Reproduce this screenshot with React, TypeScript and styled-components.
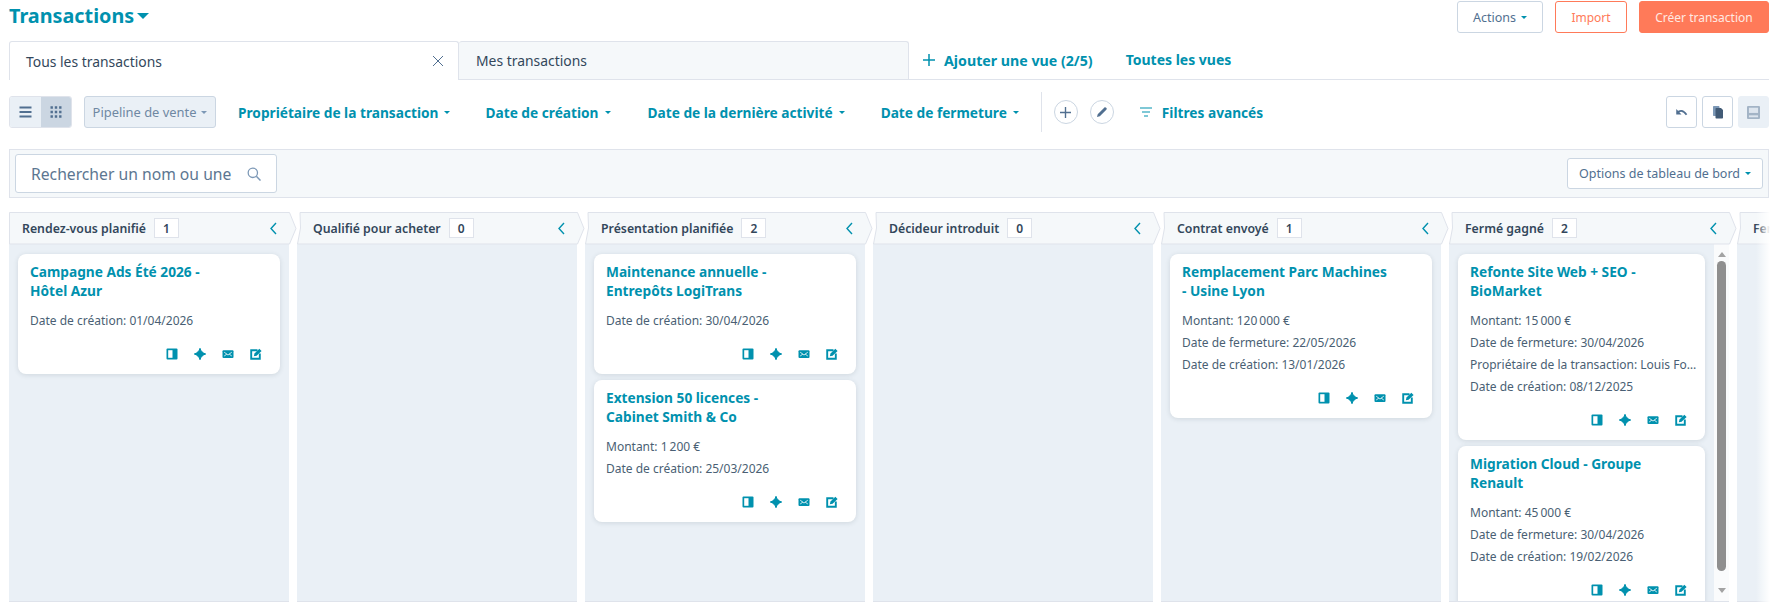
import React from "react";
import styled, { createGlobalStyle } from "styled-components";

const teal = "#0091ae";
const ink = "#33475b";
const slate = "#516f90";
const line = "#dfe3eb";
const font = `"Noto Sans", "Open Sans", sans-serif`;

const Global = createGlobalStyle`
  html, body { margin: 0; padding: 0; background: #fff; overflow: hidden; }
  * { box-sizing: border-box; }
  body { font-family: ${font}; color: ${ink}; }
`;

const Page = styled.div`
  width: 1780px;
  height: 604px;
  padding: 0 11px 0 9px;
  overflow: hidden;
`;

const TopRow = styled.header`
  display: flex;
  justify-content: space-between;
  align-items: flex-start;
  height: 41px;
  padding-top: 1px;
`;

const Title = styled.h1`
  margin: 0;
  display: flex;
  align-items: center;
  gap: 3px;
  height: 29px;
  font-size: 19.8px;
  font-weight: 700;
  color: ${teal};
`;

const BtnRow = styled.div`
  display: flex;
  gap: 12px;
`;

const Btn = styled.button<{ $kind?: "plain" | "line" | "solid"; $w?: number }>`
  width: ${(p) => (p.$w ? `${p.$w}px` : "auto")};
  height: 32px;
  padding: 0;
  border-radius: 3px;
  font-family: ${font};
  font-size: ${(p) => (p.$kind ? "12px" : "12.5px")};
  display: flex;
  align-items: center;
  justify-content: center;
  gap: 5px;
  border: 1px solid ${(p) => (p.$kind === "line" || p.$kind === "solid" ? "#ff7a59" : "#cbd6e2")};
  background: ${(p) => (p.$kind === "solid" ? "#ff7a59" : "#fff")};
  color: ${(p) => (p.$kind === "solid" ? "#ffe9e2" : p.$kind === "line" ? "#ff7a59" : slate)};
`;

const Caret = styled.span<{ $size?: number; $color?: string }>`
  display: inline-block;
  flex: none;
  width: 0;
  height: 0;
  border-left: ${(p) => p.$size ?? 3}px solid transparent;
  border-right: ${(p) => p.$size ?? 3}px solid transparent;
  border-top: ${(p) => p.$size ?? 3}px solid ${(p) => p.$color ?? teal};
`;

const TabBar = styled.nav`
  display: flex;
  align-items: stretch;
  height: 39px;
  border-bottom: 1px solid ${line};
`;

const Tab = styled.div<{ $active?: boolean }>`
  width: 450px;
  display: flex;
  align-items: center;
  justify-content: space-between;
  padding: 0 14px 0 ${(p) => (p.$active ? "16px" : "17px")};
  margin-bottom: ${(p) => (p.$active ? "-1px" : "0")};
  font-size: 13.9px;
  color: ${ink};
  background: ${(p) => (p.$active ? "#fff" : "#f5f8fa")};
  border: 1px solid ${line};
  border-bottom: none;
  border-left: ${(p) => (p.$active ? `1px solid ${line}` : "0")};
  border-radius: 3px 3px 0 0;
`;

const TabAdd = styled.div`
  display: flex;
  align-items: center;
  gap: 9px;
  margin-left: 14px;
  color: ${teal};
  font-size: 14.2px;
  font-weight: 700;
`;

const TabLink = styled.div`
  display: flex;
  align-items: center;
  margin-left: 33px;
  padding-bottom: 2px;
  color: ${teal};
  font-size: 14px;
  font-weight: 700;
`;

const Toolbar = styled.div`
  display: flex;
  align-items: center;
  height: 69px;
  padding: 0 0 5px;
`;

const Toggle = styled.div`
  display: flex;
  width: 63px;
  height: 32px;
  margin-right: 12px;
  border: 1px solid #dfe3eb;
  border-radius: 3px;
  overflow: hidden;
`;

const ToggleCell = styled.span<{ $on?: boolean }>`
  flex: 1;
  display: flex;
  align-items: center;
  justify-content: center;
  background: ${(p) => (p.$on ? "#cbd6e2" : "#eaf0f6")};
`;

const Pipeline = styled.div`
  width: 132px;
  height: 32px;
  display: flex;
  align-items: center;
  justify-content: center;
  gap: 5px;
  margin-right: 22px;
  background: #eaf0f6;
  border: 1px solid #cbd6e2;
  border-radius: 3px;
  color: #6f88a3;
  font-size: 12.9px;
`;

const Filter = styled.div<{ $gap: number }>`
  display: flex;
  align-items: center;
  gap: 6px;
  margin-right: ${(p) => p.$gap}px;
  color: ${teal};
  font-size: 13.7px;
  font-weight: 700;
  white-space: nowrap;
`;

const VSep = styled.span`
  width: 1px;
  height: 40px;
  background: ${line};
  margin-right: 12px;
`;

const RoundBtn = styled.span`
  width: 24px;
  height: 24px;
  border-radius: 50%;
  border: 1px solid #cbd6e2;
  display: flex;
  align-items: center;
  justify-content: center;
  margin-right: 12px;
`;

const Advanced = styled.div`
  display: flex;
  align-items: center;
  gap: 10px;
  margin-left: 14px;
  color: ${teal};
  font-size: 13.7px;
  font-weight: 700;
`;

const Spacer = styled.div`
  flex: 1;
`;

const SquareBtn = styled.span<{ $muted?: boolean }>`
  width: 31px;
  height: 32px;
  margin-left: 5px;
  display: flex;
  align-items: center;
  justify-content: center;
  border-radius: 3px;
  border: 1px solid ${(p) => (p.$muted ? "#eaf0f6" : "#cbd6e2")};
  background: ${(p) => (p.$muted ? "#eaf0f6" : "#fff")};
`;

const SearchStrip = styled.div`
  height: 49px;
  display: flex;
  align-items: center;
  justify-content: space-between;
  padding: 0 5px;
  background: #f5f8fa;
  border: 1px solid ${line};
`;

const SearchBox = styled.div`
  width: 262px;
  height: 39px;
  display: flex;
  align-items: center;
  justify-content: space-between;
  padding: 0 15px 0 15px;
  background: #fff;
  border: 1px solid #cbd6e2;
  border-radius: 3px;
  font-size: 15.7px;
  color: #5c7691;
  white-space: nowrap;
`;

const OptionsBtn = styled(Btn)`
  height: 31px;
`;

const Board = styled.section`
  position: relative;
  display: flex;
  gap: 8px;
  width: 1761px;
  height: 391px;
  margin-top: 14px;
  overflow: hidden;
  &::after {
    content: "";
    position: absolute;
    top: 0;
    bottom: 0;
    right: 0;
    width: 14px;
    background: linear-gradient(to right, rgba(255, 255, 255, 0), #fff);
  }
`;

const Column = styled.div`
  flex: none;
  width: 280px;
  display: flex;
  flex-direction: column;
`;

const ColHead = styled.div<{ $first?: boolean }>`
  position: relative;
  height: 32px;
  display: flex;
  align-items: center;
  padding: 0 12px 0 ${(p) => (p.$first ? "13px" : "16px")};
  flex: none;
`;

const HeadShape = styled.svg`
  position: absolute;
  left: 0;
  top: 0;
  width: 288px;
  height: 32px;
  overflow: visible;
`;

const HeadLabel = styled.span`
  position: relative;
  font-size: 12.3px;
  font-weight: 600;
  color: ${ink};
  white-space: nowrap;
`;

const Count = styled.span`
  position: relative;
  width: 25px;
  height: 20px;
  margin-left: 8px;
  display: flex;
  align-items: center;
  justify-content: center;
  font-size: 12px;
  font-weight: 600;
  background: #fff;
  border: 1px solid ${line};
  color: ${ink};
`;

const HeadChevron = styled.svg`
  position: relative;
  margin-left: auto;
`;

const ColBody = styled.div`
  flex: 1;
  display: flex;
  background: #eaf0f6;
  border-bottom: 1px solid ${line};
  margin-bottom: 1px;
  overflow: hidden;
`;

const CardList = styled.div`
  flex: 1;
  min-width: 0;
  display: flex;
  flex-direction: column;
  gap: 6px;
  padding: 10px 9px 0 9px;
`;

const Card = styled.article`
  flex: none;
  padding: 8px 12px 12px;
  background: #fff;
  border-radius: 8px;
  box-shadow: 0 1px 5px rgba(45, 62, 80, 0.14);
`;

const CardTitle = styled.div`
  font-size: 13.7px;
  line-height: 19px;
  font-weight: 700;
  color: ${teal};
  margin-bottom: 10px;
  min-height: 38px;
`;

const Row = styled.div`
  margin-right: -8px;
  font-size: 12px;
  line-height: 22px;
  color: #4a5f74;
  white-space: nowrap;
  overflow: hidden;
  text-overflow: ellipsis;
`;

const Actions = styled.div`
  display: flex;
  justify-content: flex-end;
  align-items: center;
  gap: 16px;
  height: 16px;
  margin-top: 14px;
  padding-right: 6px;
`;

const Scroll = styled.div`
  flex: none;
  width: 15px;
  background: #fafbfc;
  display: flex;
  flex-direction: column;
  align-items: center;
  padding-top: 8px;
`;

const ArrowUp = styled.span`
  width: 0;
  height: 0;
  border-left: 4.5px solid transparent;
  border-right: 4.5px solid transparent;
  border-bottom: 5px solid #a3a3a3;
`;

const ArrowDown = styled.span`
  width: 0;
  height: 0;
  margin-top: 17px;
  border-left: 4.5px solid transparent;
  border-right: 4.5px solid transparent;
  border-top: 5px solid #a3a3a3;
`;

const Thumb = styled.span`
  width: 9px;
  height: 310px;
  margin-top: 4px;
  border-radius: 5px;
  background: #8f8f8f;
`;

const IconSvg = styled.svg`
  display: block;
  flex: none;
`;

const Ic = ({ children, w = 12, h = 12, vb = "0 0 12 12" }: { children: React.ReactNode; w?: number; h?: number; vb?: string }) => (
  <IconSvg width={w} height={h} viewBox={vb}>
    {children}
  </IconSvg>
);

const CardIcons = () => (
  <Actions>
    <Ic>
      <rect x="0.5" y="0.5" width="11" height="11" rx="1" fill={teal} />
      <rect x="2.2" y="2.2" width="4.3" height="7.6" fill="#fff" />
    </Ic>
    <Ic>
      <path d="M6 0.3C6.8 3.2 8.6 5 11.7 6C8.6 7 6.8 8.8 6 11.7C5.2 8.8 3.4 7 0.3 6C3.4 5 5.2 3.2 6 0.3Z" fill={teal} stroke={teal} strokeWidth="1" />
    </Ic>
    <Ic>
      <rect x="0.5" y="2.2" width="11" height="7.8" rx="1" fill={teal} />
      <path d="M2.2 4.2L4.8 6.1L2.2 8M9.8 4.2L7.2 6.1L9.8 8M4.6 6.1L6 7L7.4 6.1" fill="none" stroke="#fff" strokeWidth="0.8" />
    </Ic>
    <Ic>
      <path d="M7.5 2.2H1.2V10.8H9.8V5.5" fill="none" stroke={teal} strokeWidth="1.9" />
      <path d="M3.8 8.3L4.5 5.6L9.3 0.8L11.6 3.1L6.6 7.7Z" fill={teal} />
    </Ic>
  </Actions>
);

type CardData = { title: React.ReactNode; rows: string[] };
type ColData = { name: string; count: number; cards: CardData[]; scroll?: boolean };

const columns: ColData[] = [
  {
    name: "Rendez-vous planifié",
    count: 1,
    cards: [{ title: <>Campagne Ads Été 2026 -<br />Hôtel Azur</>, rows: ["Date de création: 01/04/2026"] }],
  },
  { name: "Qualifié pour acheter", count: 0, cards: [] },
  {
    name: "Présentation planifiée",
    count: 2,
    cards: [
      { title: <>Maintenance annuelle -<br />Entrepôts LogiTrans</>, rows: ["Date de création: 30/04/2026"] },
      { title: <>Extension 50 licences -<br />Cabinet Smith &amp; Co</>, rows: ["Montant: 1\u202f200 €", "Date de création: 25/03/2026"] },
    ],
  },
  { name: "Décideur introduit", count: 0, cards: [] },
  {
    name: "Contrat envoyé",
    count: 1,
    cards: [
      {
        title: <>Remplacement Parc Machines<br />- Usine Lyon</>,
        rows: ["Montant: 120\u202f000 €", "Date de fermeture: 22/05/2026", "Date de création: 13/01/2026"],
      },
    ],
  },
  {
    name: "Fermé gagné",
    count: 2,
    scroll: true,
    cards: [
      {
        title: <>Refonte Site Web + SEO -<br />BioMarket</>,
        rows: ["Montant: 15\u202f000 €", "Date de fermeture: 30/04/2026", "Propriétaire de la transaction: Louis Fontaine", "Date de création: 08/12/2025"],
      },
      {
        title: <>Migration Cloud - Groupe<br />Renault</>,
        rows: ["Montant: 45\u202f000 €", "Date de fermeture: 30/04/2026", "Date de création: 19/02/2026"],
      },
    ],
  },
  { name: "Fermé perdu", count: 0, cards: [] },
];

const filters: [string, number][] = [
  ["Propriétaire de la transaction", 35],
  ["Date de création", 37],
  ["Date de la dernière activité", 36],
  ["Date de fermeture", 22],
];

const Shape = ({ first }: { first: boolean }) => (
  <HeadShape viewBox="0 0 288 32">
    <path
      d={first ? "M0.5 32V0.5H280.5L287 16.5L280.5 32Z" : "M0.5 32L3.5 16L3 0.5H280.5L287 16.5L280.5 32Z"}
      fill="#f5f8fa"
      stroke={line}
      strokeWidth="1"
    />
  </HeadShape>
);

export default function App() {
  return (
    <Page>
      <Global />
      <TopRow>
        <Title>
          Transactions <Caret $size={6} />
        </Title>
        <BtnRow>
          <Btn $w={86}>
            Actions <Caret />
          </Btn>
          <Btn $kind="line" $w={72}>Import</Btn>
          <Btn $kind="solid" $w={130}>Créer transaction</Btn>
        </BtnRow>
      </TopRow>

      <TabBar>
        <Tab $active>
          Tous les transactions
          <Ic>
            <path d="M1 1L11 11M11 1L1 11" stroke="#516f90" strokeWidth="1" />
          </Ic>
        </Tab>
        <Tab>Mes transactions</Tab>
        <TabAdd>
          <Ic>
            <path d="M6 0V12M0 6H12" stroke={teal} strokeWidth="1.5" />
          </Ic>
          Ajouter une vue (2/5)
        </TabAdd>
        <TabLink>Toutes les vues</TabLink>
      </TabBar>

      <Toolbar>
        <Toggle>
          <ToggleCell>
            <Ic w={13} h={12}>
              <path d="M0 1.5H12M0 6H12M0 10.5H12" stroke={slate} strokeWidth="2.2" />
            </Ic>
          </ToggleCell>
          <ToggleCell $on>
            <Ic>
              <path d="M0.5 1.5H11.5M0.5 6H11.5M0.5 10.5H11.5" stroke={slate} strokeWidth="2.4" strokeDasharray="2.4 1.9" />
            </Ic>
          </ToggleCell>
        </Toggle>
        <Pipeline>
          Pipeline de vente <Caret $color="#7c98b6" />
        </Pipeline>
        {filters.map(([f, g]) => (
          <Filter key={f} $gap={g}>
            {f} <Caret $size={3.5} />
          </Filter>
        ))}
        <VSep />
        <RoundBtn>
          <Ic w={11} h={11}>
            <path d="M6 0V12M0 6H12" stroke="#516f90" strokeWidth="1.5" />
          </Ic>
        </RoundBtn>
        <RoundBtn>
          <Ic>
            <path d="M1 11L1.7 8.2L8.2 1.7C8.8 1.1 9.5 1.1 10.2 1.8C10.9 2.5 10.9 3.2 10.3 3.8L3.8 10.3Z" fill="#516f90" />
          </Ic>
        </RoundBtn>
        <Advanced>
          <Ic>
            <path d="M0 2H12M2 6H10M4 10H8" stroke={teal} strokeWidth="1.2" />
          </Ic>
          Filtres avancés
        </Advanced>
        <Spacer />
        <SquareBtn>
          <Ic w={13} h={11}>
            <path d="M1.5 6.5C3.5 3.8 7.5 2.6 11.5 8.5" fill="none" stroke="#516f90" strokeWidth="1.9" />
            <path d="M0.3 2.3V8.3H6Z" fill="#516f90" />
          </Ic>
        </SquareBtn>
        <SquareBtn>
          <Ic w={12} h={14} vb="0 0 12 14">
            <path d="M1 2C1 1.4 1.4 1 2 1H6.5C7 1 7.5 1.5 7.5 2V10C7.5 10.6 7 11 6.5 11H2C1.4 11 1 10.6 1 10Z" fill="#7c98b6" />
            <path d="M3.5 4C3.5 3.4 3.9 3 4.5 3H9L11 5V12.5C11 13.1 10.6 13.5 10 13.5H4.5C3.9 13.5 3.5 13.1 3.5 12.5Z" fill="#425b76" />
          </Ic>
        </SquareBtn>
        <SquareBtn $muted>
          <Ic w={13} h={13}>
            <rect x="0" y="0" width="12" height="12" rx="1" fill="#a3b4c6" />
            <rect x="1.8" y="1.6" width="8.4" height="4.8" fill="#dde5ee" />
            <rect x="1.8" y="8.6" width="8.4" height="1.8" fill="#dde5ee" />
          </Ic>
        </SquareBtn>
      </Toolbar>

      <SearchStrip>
        <SearchBox>
          Rechercher un nom ou une
          <Ic w={14} h={14}>
            <circle cx="5" cy="5" r="4" fill="none" stroke="#7c98b6" strokeWidth="1.1" />
            <path d="M8 8L11.6 11.6" stroke="#7c98b6" strokeWidth="1.3" />
          </Ic>
        </SearchBox>
        <OptionsBtn $w={196}>
          Options de tableau de bord <Caret />
        </OptionsBtn>
      </SearchStrip>

      <Board>
        {columns.map((c, i) => (
          <Column key={c.name}>
            <ColHead $first={i === 0}>
              <Shape first={i === 0} />
              <HeadLabel>{c.name}</HeadLabel>
              <Count>{c.count}</Count>
              <HeadChevron width="7" height="13" viewBox="0 0 7 13">
                <path d="M6 1L1 6.5L6 12" fill="none" stroke={teal} strokeWidth="1.4" />
              </HeadChevron>
            </ColHead>
            <ColBody>
              <CardList>
                {c.cards.map((k, j) => (
                  <Card key={j}>
                    <CardTitle>{k.title}</CardTitle>
                    {k.rows.map((r) => (
                      <Row key={r}>{r}</Row>
                    ))}
                    <CardIcons />
                  </Card>
                ))}
              </CardList>
              {c.scroll && (
                <Scroll>
                  <ArrowUp />
                  <Thumb />
                  <ArrowDown />
                </Scroll>
              )}
            </ColBody>
          </Column>
        ))}
      </Board>
    </Page>
  );
}
